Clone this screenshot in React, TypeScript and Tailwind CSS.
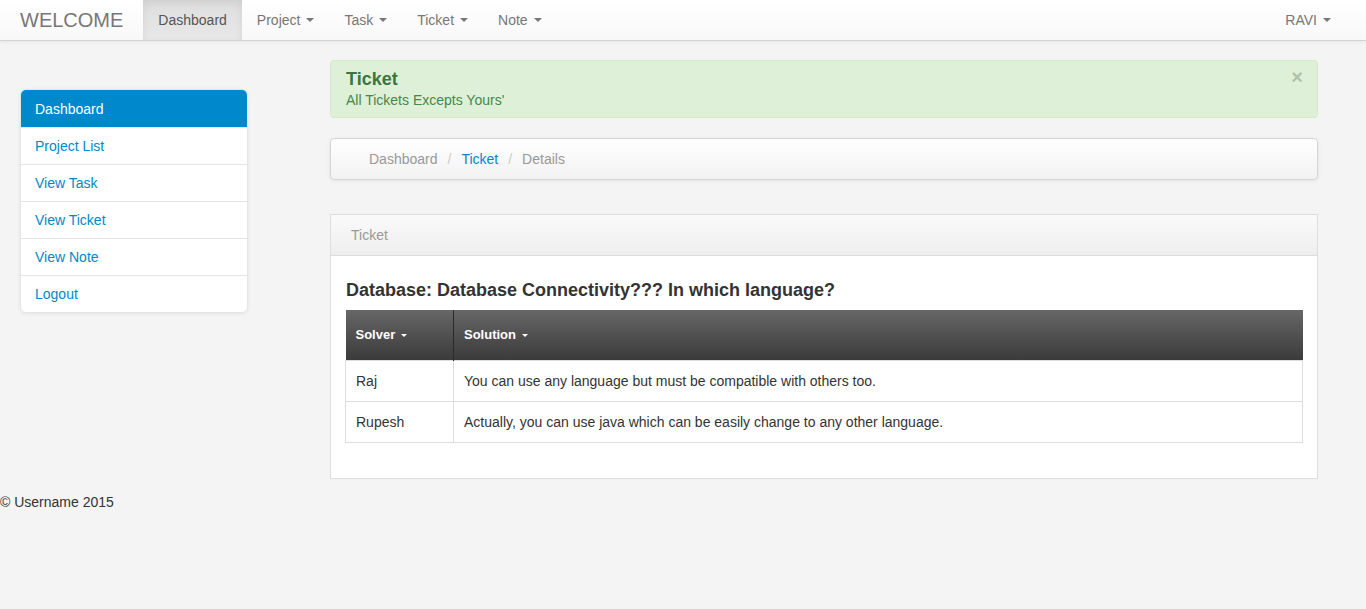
import { ReactNode } from "react";

function Caret({ color, size = 4 }: { color: string; size?: 3 | 4 }) {
  const dims = size === 3 ? "border-x-[3px] border-t-[3px]" : "border-x-[4px] border-t-[4px]";
  return (
    <span
      className={`ml-[6px] inline-block h-0 w-0 border-x-transparent align-middle ${dims} ${color}`}
    />
  );
}

function NavItem({ children, active, dropdown }: { children: ReactNode; active?: boolean; dropdown?: boolean }) {
  return (
    <a
      className={`flex h-[40px] items-center px-[15px] text-[14px] ${
        active
          ? "bg-gradient-to-b from-[#dedede] to-[#e8e8e8] text-[#555] shadow-[inset_0_3px_8px_rgba(0,0,0,0.075)]"
          : "text-[#777]"
      }`}
    >
      {children}
      {dropdown && <Caret color="border-t-[#777]" />}
    </a>
  );
}

const sideLinks = ["Project List", "View Task", "View Ticket", "View Note", "Logout"];

const rows = [
  { solver: "Raj", solution: "You can use any language but must be compatible with others too." },
  { solver: "Rupesh", solution: "Actually, you can use java which can be easily change to any other language." },
];

export default function App() {
  return (
    <div className="min-h-[609px] bg-[#f4f4f4] font-['Liberation_Sans',Arial,sans-serif] text-[14px] leading-[20px] text-[#333]">
      {/* navbar */}
      <div className="flex h-[41px] items-start border-b border-[#d4d4d4] bg-gradient-to-b from-white to-[#f8f8f8] shadow-[0_1px_4px_rgba(0,0,0,0.065)]">
        <a className="flex h-[40px] items-center pl-[20px] pr-[20px] text-[20px] text-[#777]">WELCOME</a>
        <NavItem active>Dashboard</NavItem>
        <NavItem dropdown>Project</NavItem>
        <NavItem dropdown>Task</NavItem>
        <NavItem dropdown>Ticket</NavItem>
        <NavItem dropdown>Note</NavItem>
        <div className="ml-auto pr-[20px]">
          <NavItem dropdown>RAVI</NavItem>
        </div>
      </div>

      <div className="-mt-px flex">
        {/* sidebar */}
        <div className="w-[330px] shrink-0 pl-[20px] pt-[49px]">
          <ul className="w-[228px] overflow-hidden rounded-[6px] border border-[#e5e5e5] bg-white shadow-[0_1px_4px_rgba(0,0,0,0.065)]">
            <li className="flex h-[37px] items-center bg-[#0088cc] px-[14px] text-white">Dashboard</li>
            {sideLinks.map((l) => (
              <li key={l} className="flex h-[37px] items-center border-t border-[#e5e5e5] px-[14px] text-[#0088cc]">
                {l}
              </li>
            ))}
          </ul>
        </div>

        {/* main */}
        <div className="w-[988px] pt-[20px]">
          <div className="relative h-[58px] rounded-[4px] border border-[#d6e9c6] bg-[#dff0d8] px-[15px] pt-[7px] text-[#468847]">
            <div className="text-[18px] font-bold leading-[22px] text-[#3c763d]">Ticket</div>
            <div className="leading-[20px]">All Tickets Excepts Yours'</div>
            <span className="absolute right-[14px] top-[5px] text-[20px] font-bold leading-[22px] text-[#000] opacity-20">×</span>
          </div>

          <div className="mt-[20px] flex h-[42px] items-center rounded-[4px] border border-[#d4d4d4] bg-gradient-to-b from-white to-[#f2f2f2] pl-[38px] shadow-[0_1px_4px_rgba(0,0,0,0.065)]">
            <span className="text-[#999]">Dashboard</span>
            <span className="px-[10px] text-[#ccc]">/</span>
            <span className="text-[#0088cc]">Ticket</span>
            <span className="px-[10px] text-[#ccc]">/</span>
            <span className="text-[#999]">Details</span>
          </div>

          <div className="mt-[34px] border border-[#dddddd] bg-white">
            <div className="flex h-[41px] items-center border-b border-[#dddddd] bg-gradient-to-b from-[#fafafa] to-[#eeeeee] px-[20px] text-[#999]">
              Ticket
            </div>
            <div className="px-[14px] pb-[15px] pt-[24px]">
              <h3 className="mb-[10px] pl-px text-[18px] font-bold leading-[20px] text-[#333]">
                Database: Database Connectivity??? In which language?
              </h3>
              <table className="mb-[20px] w-full border-collapse">
                <thead>
                  <tr className="h-[50px] bg-gradient-to-b from-[#676767] to-[#3b3b3b] text-left text-[13px] font-bold text-white">
                    <th className="w-[108px] border-r border-[#2a2a2a] px-[10px]">
                      Solver
                      <Caret color="border-t-white" size={3} />
                    </th>
                    <th className="px-[10px]">
                      Solution
                      <Caret color="border-t-white" size={3} />
                    </th>
                  </tr>
                </thead>
                <tbody>
                  {rows.map((r) => (
                    <tr key={r.solver} className="h-[41px]">
                      <td className="border border-[#dddddd] px-[10px]">{r.solver}</td>
                      <td className="border border-[#dddddd] px-[10px]">{r.solution}</td>
                    </tr>
                  ))}
                </tbody>
              </table>
            </div>
          </div>
        </div>
      </div>

      <div className="mt-[13px] text-[#333]">© Username 2015</div>
    </div>
  );
}
